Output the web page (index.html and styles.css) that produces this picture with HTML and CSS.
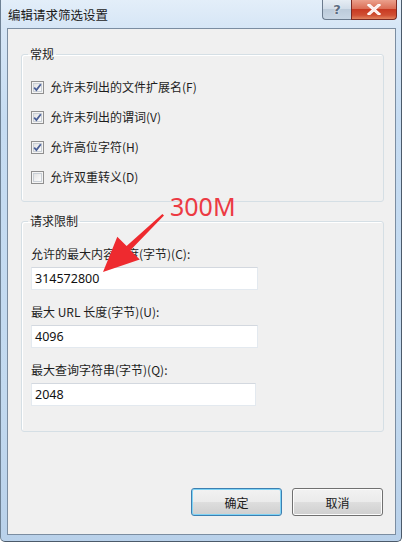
FILE: index.html
```html
<!DOCTYPE html>
<html lang="zh-CN">
<head>
<meta charset="utf-8">
<title>编辑请求筛选设置</title>
<link rel="stylesheet" href="styles.css">
</head>
<body>
<div class="window">
  <div class="titlebar">
    <span class="title">编辑请求筛选设置</span>
    <div class="caption-buttons">
      <span class="cap-btn help">?</span>
      <span class="cap-btn close">
        <svg width="14" height="11" viewBox="0 0 14 11"><path d="M2 1 L12 10 M12 1 L2 10" stroke="#ffffff" stroke-width="3" stroke-linecap="square" fill="none"/><path d="M2 1 L12 10 M12 1 L2 10" stroke="#fbeaea" stroke-width="1.5" fill="none"/></svg>
      </span>
    </div>
  </div>
  <div class="client">
    <fieldset class="group group-general">
      <legend>常规</legend>
      <div class="check-row"><span class="checkbox checked"><svg width="9" height="9" viewBox="0 0 9 9"><path d="M1.2 4.6 L3.4 7 L7.8 1.2" stroke="#4a5f97" stroke-width="1.8" fill="none"/></svg></span><span class="check-label">允许未列出的文件扩展名(F)</span></div>
      <div class="check-row"><span class="checkbox checked"><svg width="9" height="9" viewBox="0 0 9 9"><path d="M1.2 4.6 L3.4 7 L7.8 1.2" stroke="#4a5f97" stroke-width="1.8" fill="none"/></svg></span><span class="check-label">允许未列出的谓词(V)</span></div>
      <div class="check-row"><span class="checkbox checked"><svg width="9" height="9" viewBox="0 0 9 9"><path d="M1.2 4.6 L3.4 7 L7.8 1.2" stroke="#4a5f97" stroke-width="1.8" fill="none"/></svg></span><span class="check-label">允许高位字符(H)</span></div>
      <div class="check-row"><span class="checkbox"></span><span class="check-label">允许双重转义(D)</span></div>
    </fieldset>
    <fieldset class="group group-limits">
      <legend>请求限制</legend>
      <div class="field">
        <div class="field-label">允许的最大内容长度(字节)(C):</div>
        <div class="textbox wide">314572800</div>
      </div>
      <div class="field">
        <div class="field-label">最大 URL 长度(字节)(U):</div>
        <div class="textbox wide">4096</div>
      </div>
      <div class="field">
        <div class="field-label">最大查询字符串(字节)(Q):</div>
        <div class="textbox narrow">2048</div>
      </div>
    </fieldset>
    <div class="footer">
      <span class="button default">确定</span>
      <span class="button">取消</span>
    </div>
  </div>
  <div class="annotation">
    <span class="note">300M</span>
    <svg class="arrow" width="402" height="542" viewBox="0 0 402 542">
      <polygon points="161.4,214.0 125.6,246.0 116.3,236.8 102,272 138.8,259.6 129.4,250.2 163.0,215.6" fill="#ee2a2f"/>
    </svg>
  </div>
</div>
</body>
</html>
```
FILE: styles.css
```css
* { box-sizing: border-box; }
html, body {
  margin: 0;
  padding: 0;
  background: #ffffff;
}
body {
  font-family: "Noto Sans CJK SC", "Noto Sans", sans-serif;
  font-size: 12px;
  color: #000000;
}
.window {
  position: relative;
  width: 402px;
  height: 542px;
  display: flex;
  flex-direction: column;
  background: linear-gradient(180deg, #e3eef9 0px, #d6e6f6 28px, #c6dcf2 120px, #c2d9ef 400px, #b9d1ea 542px);
  border: 1px solid #4b5a6a;
  border-top: none;
  border-left-color: #6e8194;
  border-radius: 0 0 5px 5px;
  overflow: hidden;
}
.titlebar {
  height: 28px;
  display: flex;
  align-items: flex-start;
  padding-left: 7px;
}
.title {
  margin-top: 6px;
  line-height: 17px;
  font-size: 12.5px;
  color: #1b1b1b;
}
.caption-buttons {
  margin-left: auto;
  margin-right: 4px;
  display: flex;
  height: 20px;
}
.cap-btn {
  height: 20px;
  display: flex;
  align-items: center;
  justify-content: center;
  border: 1px solid #6b7b8d;
  border-top: none;
}
.help {
  width: 29px;
  border-radius: 0 0 0 4px;
  border-right: none;
  background: linear-gradient(180deg, #e6edf4 0%, #d2dde9 45%, #bccbda 50%, #c8d6e4 100%);
  color: #5b6b80;
  font-family: "DejaVu Sans", sans-serif;
  font-weight: bold;
  font-size: 13px;
  text-shadow: 0 0 2px #ffffff;
}
.close {
  width: 46px;
  border-radius: 0 0 4px 0;
  border-color: #7b2a22;
  background: linear-gradient(180deg, #eba08c 0%, #db6f57 45%, #c83a22 50%, #d04f33 80%, #e2845f 100%);
}
.client {
  margin: 0 5px 0 6px;
  height: 507px;
  background: #f0f0f0;
  border: 1px solid #7b8da1;
  display: flex;
  flex-direction: column;
}
.group {
  margin: 17px 11px 0 13px;
  border: 1px solid #d5dfe5;
  border-radius: 3px;
  box-shadow: inset 1px 1px 0 #ffffff;
  min-width: 0;
}
.group legend {
  padding: 0 2px;
  margin-left: -3px;
  line-height: 16px;
  color: #1e1e1e;
}
.group-general {
  padding: 10px 0 9px 9px;
}
.check-row {
  height: 30px;
  display: flex;
  align-items: center;
}
.checkbox {
  width: 13px;
  height: 13px;
  border: 1px solid #8f8f8f;
  background: linear-gradient(135deg, #dcdcdc 0%, #f4f4f4 60%, #ffffff 100%);
  box-shadow: inset 0 0 0 1px #f4f4f4, inset 0 0 0 2px #c9cfd6;
  display: flex;
  align-items: center;
  justify-content: center;
  margin-right: 6px;
  flex: none;
}
.check-label {
  line-height: 16px;
  color: #1e1e1e;
}
.group-limits {
  margin-top: 11px;
  padding: 17px 0 25px 9px;
  display: flex;
  flex-direction: column;
  gap: 14px;
}
.field {
  display: flex;
  flex-direction: column;
  gap: 5px;
}
.field-label {
  line-height: 16px;
  color: #1e1e1e;
}
.textbox {
  height: 23px;
  background: #ffffff;
  border: 1px solid #e3e9ef;
  border-top-color: #d3d8df;
  padding: 0 3px;
  line-height: 21px;
  font-family: "Noto Sans", "Noto Sans CJK SC", sans-serif;
  font-size: 12.5px;
  color: #111111;
}
.wide { width: 227px; }
.narrow { width: 225px; }
.footer {
  margin-top: auto;
  margin-bottom: 18px;
  margin-right: 12px;
  display: flex;
  justify-content: flex-end;
  gap: 10px;
}
.button {
  width: 91px;
  height: 28px;
  display: flex;
  align-items: center;
  justify-content: center;
  border: 1px solid #707070;
  border-radius: 3px;
  background: linear-gradient(180deg, #f2f2f2 0%, #ebebeb 48%, #dddddd 52%, #cfcfcf 100%);
  box-shadow: inset 0 0 0 1px #fcfcfc;
  color: #1a1a1a;
}
.button.default {
  border-color: #3c7fb1;
  box-shadow: inset 0 0 0 1px #7fd3f5;
}
.annotation {
  position: absolute;
  left: 0;
  top: 0;
  width: 402px;
  height: 542px;
  pointer-events: none;
}
.note {
  position: absolute;
  left: 169px;
  top: 189px;
  font-family: "Noto Sans", sans-serif;
  font-size: 25px;
  line-height: 34px;
  color: #ec3a43;
}
.arrow {
  position: absolute;
  left: 0;
  top: 0;
}
```
